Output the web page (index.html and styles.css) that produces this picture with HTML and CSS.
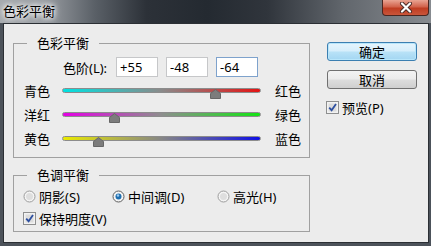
FILE: index.html
```html
<!DOCTYPE html>
<html lang="zh-CN">
<head>
    <meta charset="UTF-8">
    <title>色彩平衡</title>
    <link rel="stylesheet" href="styles.css">
</head>
<body>
<div class="window">
    <div class="titlebar">
        <span class="title">色彩平衡</span>
        <div class="close">
            <svg width="20" height="11" viewBox="0 0 20 11">
                <path d="M6 1.5 L14 9.5 M14 1.5 L6 9.5" stroke="#4a2a26" stroke-width="4" stroke-linecap="round"/>
                <path d="M6 1.5 L14 9.5 M14 1.5 L6 9.5" stroke="#fff" stroke-width="2.2" stroke-linecap="round"/>
            </svg>
        </div>
    </div>
    <div class="frame">
        <div class="client">
            <div class="main">
                <fieldset class="group">
                    <legend>色彩平衡</legend>
                    <div class="levels">
                        <label class="levels-label" for="lv1">色阶(L):</label>
                        <input class="field" type="text" id="lv1" value="+55">
                        <input class="field" type="text" id="lv2" value="-48">
                        <input class="field field-focus" type="text" id="lv3" value="-64">
                    </div>
                    <div class="slider-row">
                        <span class="slider-name">青色</span>
                        <div class="track track-cr">
                            <svg class="thumb" style="left: calc(77.5% - 5.5px)" width="11" height="10" viewBox="0 0 11 10"><path d="M5.5 0.5 L10.5 4.5 V9.5 H0.5 V4.5 Z" fill="#7c7c7c" stroke="#666"/></svg>
                        </div>
                        <span class="slider-end">红色</span>
                    </div>
                    <div class="slider-row">
                        <span class="slider-name">洋红</span>
                        <div class="track track-mg">
                            <svg class="thumb" style="left: calc(26% - 5.5px)" width="11" height="10" viewBox="0 0 11 10"><path d="M5.5 0.5 L10.5 4.5 V9.5 H0.5 V4.5 Z" fill="#7c7c7c" stroke="#666"/></svg>
                        </div>
                        <span class="slider-end">绿色</span>
                    </div>
                    <div class="slider-row">
                        <span class="slider-name">黄色</span>
                        <div class="track track-yb">
                            <svg class="thumb" style="left: calc(18% - 5.5px)" width="11" height="10" viewBox="0 0 11 10"><path d="M5.5 0.5 L10.5 4.5 V9.5 H0.5 V4.5 Z" fill="#7c7c7c" stroke="#666"/></svg>
                        </div>
                        <span class="slider-end">蓝色</span>
                    </div>
                </fieldset>

                <fieldset class="group group-tone">
                    <legend>色调平衡</legend>
                    <div class="radio-row">
                        <span class="opt opt-1">
                            <svg class="icon" width="13" height="13" viewBox="0 0 13 13"><circle cx="6.5" cy="6.5" r="5.5" fill="#f4f4f4" stroke="#9c9c9c"/><circle cx="6.5" cy="6.5" r="3.5" fill="#dedede"/></svg>
                            阴影(S)
                        </span>
                        <span class="opt opt-2">
                            <svg class="icon" width="13" height="13" viewBox="0 0 13 13"><circle cx="6.5" cy="6.5" r="5.5" fill="#f4f4f4" stroke="#5e5e5e"/><circle cx="6.5" cy="6.5" r="3" fill="#1f6fb0"/><circle cx="6" cy="5.5" r="1.2" fill="#9ccbf0"/></svg>
                            中间调(D)
                        </span>
                        <span class="opt">
                            <svg class="icon" width="13" height="13" viewBox="0 0 13 13"><circle cx="6.5" cy="6.5" r="5.5" fill="#f4f4f4" stroke="#9c9c9c"/><circle cx="6.5" cy="6.5" r="3.5" fill="#dedede"/></svg>
                            高光(H)
                        </span>
                    </div>
                    <div class="check-row">
                        <svg class="icon" width="13" height="13" viewBox="0 0 13 13"><rect x="0.5" y="0.5" width="12" height="12" fill="#f2f2f2" stroke="#8e8f8f"/><rect x="2.5" y="2.5" width="8" height="8" fill="#dcdcdc"/><path d="M3.2 6.6 L5.6 9.2 L10 3" stroke="#2d4fa0" stroke-width="1.8" fill="none"/></svg>
                        保持明度(V)
                    </div>
                </fieldset>
            </div>

            <div class="side">
                <button class="btn btn-default">确定</button>
                <button class="btn">取消</button>
                <div class="check-row preview">
                    <svg class="icon" width="13" height="13" viewBox="0 0 13 13"><rect x="0.5" y="0.5" width="12" height="12" fill="#f2f2f2" stroke="#8e8f8f"/><rect x="2.5" y="2.5" width="8" height="8" fill="#dcdcdc"/><path d="M3.2 6.6 L5.6 9.2 L10 3" stroke="#2d4fa0" stroke-width="1.8" fill="none"/></svg>
                    预览(P)
                </div>
            </div>
        </div>
    </div>
</div>
</body>
</html>
```

FILE: styles.css
```css
body {
    margin: 0;
    font-family: "Noto Sans", "Noto Sans CJK SC", sans-serif;
    font-size: 13px;
    color: #000;
}

.window {
    width: 431px;
    height: 246px;
    display: flex;
    flex-direction: column;
    background-color: #4c525a;
}

.titlebar {
    height: 23px;
    display: flex;
    justify-content: space-between;
    align-items: flex-start;
    background: linear-gradient(to right, #a6aaae 0, #9a9ea3 10%, #5a6067 22%, #2c3138 34%, #242a31 48%, #30353c 62%, #62676d 80%, #878b90 100%);
}

.title {
    padding: 3px 0 0 3px;
    line-height: 16px;
    text-shadow: 0 0 4px #fff, 0 0 6px #fff, 0 0 8px rgba(255, 255, 255, 0.8);
}

.close {
    width: 45px;
    height: 15px;
    margin-right: 2px;
    display: flex;
    align-items: center;
    justify-content: center;
    border: 1px solid #4a2620;
    border-top: none;
    border-radius: 0 0 4px 4px;
    background: linear-gradient(#e9a493 0, #d2634c 45%, #bf3d22 55%, #c9553a 100%);
}

.frame {
    flex: 1;
    display: flex;
    padding: 0 2px 3px 3px;
}

.client {
    flex: 1;
    display: flex;
    border: 1px solid #2b2f34;
    background-color: #ececec;
    padding: 12px 0 0 9px;
}

.main {
    width: 297px;
}

.group {
    margin: 0;
    padding: 7px 0 7px 10px;
    border: 1px solid #a0a0a0;
}

.group legend {
    margin-left: 3px;
    padding: 0 10px;
    line-height: 14px;
}

.levels {
    display: flex;
    align-items: center;
    height: 20px;
    margin-bottom: 1px;
    padding-left: 39px;
}

.levels-label {
    margin-right: 9px;
}

.field {
    width: 42px;
    height: 20px;
    box-sizing: border-box;
    margin: 0 8px 0 0;
    padding: 0 3px;
    border: 1px solid #c6c7c9;
    font-family: "Noto Sans", sans-serif;
    font-size: 13px;
    background-color: #fff;
}

.field-focus {
    border-color: #7ea2cc;
}

.slider-row {
    display: flex;
    align-items: center;
    height: 24px;
}

.slider-name {
    width: 38px;
}

.slider-end {
    margin-left: 14px;
}

.track {
    position: relative;
    width: 199px;
    height: 5px;
    box-sizing: border-box;
    border: 1px solid #8c8c8c;
    border-radius: 3px;
}

.track-cr {
    background: linear-gradient(to right, #00e2e2, #8a8a8a 50%, #e41414);
}

.track-mg {
    background: linear-gradient(to right, #e400e4, #8e8e8e 50%, #14e414);
}

.track-yb {
    background: linear-gradient(to right, #eaea00, #868686 50%, #1010e4);
}

.thumb {
    position: absolute;
    top: 0;
    display: block;
}

.group-tone {
    margin-top: 10px;
    padding: 4px 0 3px 10px;
}

.radio-row,
.check-row {
    display: flex;
    align-items: center;
    height: 20px;
}

.check-row {
    margin-top: 2px;
}

.opt {
    display: flex;
    align-items: center;
}

.opt-1 {
    width: 89px;
}

.opt-2 {
    width: 105px;
}

.icon {
    display: block;
    margin: 0 3px 0 -1px;
}

.side {
    width: 90px;
    margin-left: 17px;
    padding-top: 6px;
    display: flex;
    flex-direction: column;
}

.btn {
    height: 19px;
    margin-bottom: 9px;
    padding: 0;
    border: 1px solid #707070;
    border-radius: 3px;
    font-family: "Noto Sans CJK SC", sans-serif;
    font-size: 13px;
    line-height: 16px;
    color: #000;
    background: linear-gradient(#f3f3f3 0, #ebebeb 48%, #dddddd 52%, #cfcfcf 100%);
}

.btn-default {
    border-color: #3c7fb1;
    background: linear-gradient(#e6f5fd 0, #d6eefb 48%, #b9e2f7 52%, #a3d6f2 100%);
    box-shadow: inset 0 0 0 1px #b8e6fb;
}

.preview {
    margin-top: 2px;
    height: 14px;
}
```
